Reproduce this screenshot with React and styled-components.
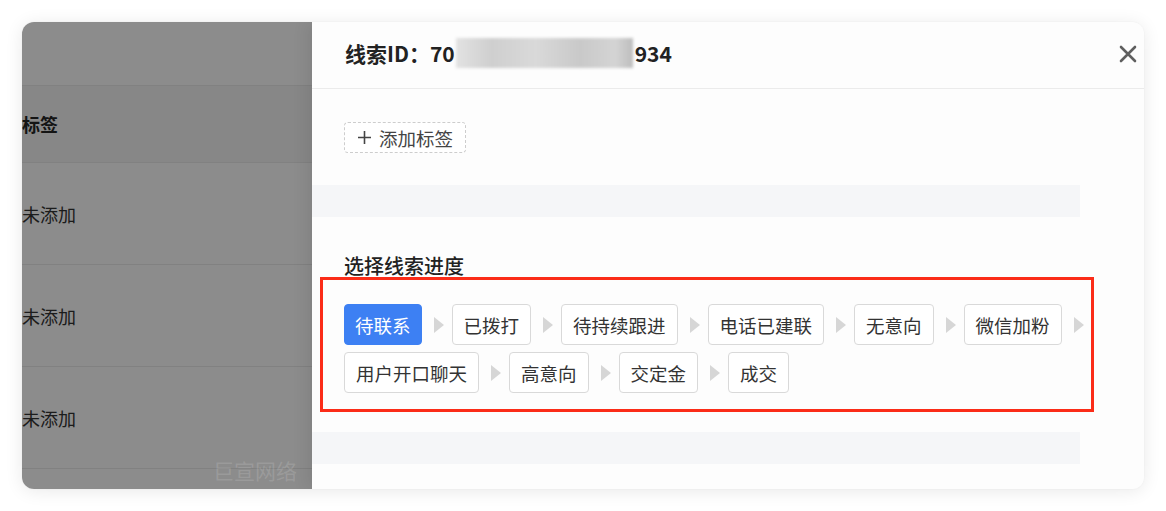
import React from "react";
import styled, { createGlobalStyle } from "styled-components";

const Global = createGlobalStyle`
  html, body { margin: 0; padding: 0; background: #ffffff; }
  body { font-family: "Noto Sans CJK SC", "Noto Sans", "Liberation Sans", sans-serif; }
  * { box-sizing: border-box; }
`;

const Page = styled.div`
  width: 1166px;
  height: 511px;
  padding: 22px 0 0 22px;
`;

const Card = styled.div`
  position: relative;
  width: 1122px;
  height: 467px;
  border-radius: 12px;
  overflow: hidden;
  display: flex;
  background: #fdfdfd;
  box-shadow: 0 2px 18px rgba(0, 0, 0, 0.09), 0 0 2px rgba(0, 0, 0, 0.05);
`;

const LeftPane = styled.div`
  position: relative;
  width: 290px;
  flex: none;
  background: #ffffff;
  display: flex;
  flex-direction: column;
`;

const TopBlank = styled.div`
  height: 63px;
  flex: none;
`;

const TableHead = styled.div`
  height: 78px;
  flex: none;
  display: flex;
  align-items: center;
  background: #f6f6f6;
  border-top: 1px solid #ececec;
  border-bottom: 1px solid #ececec;
  font-size: 18px;
  font-weight: 700;
  color: #262626;
`;

const TableRow = styled.div`
  height: 102px;
  flex: none;
  display: flex;
  align-items: center;
  border-bottom: 1px solid #ececec;
  font-size: 18px;
  color: #333333;
`;

const Mask = styled.div`
  position: absolute;
  inset: 0;
  background: rgba(0, 0, 0, 0.45);
`;

const Brand = styled.div`
  position: absolute;
  left: 191px;
  bottom: 4px;
  font-size: 21px;
  color: rgba(255, 255, 255, 0.14);
`;

const Drawer = styled.div`
  flex: 1;
  display: flex;
  flex-direction: column;
  background: #fdfdfd;
  box-shadow: -6px 0 14px rgba(0, 0, 0, 0.07);
  z-index: 1;
`;

const Header = styled.div`
  height: 67px;
  flex: none;
  display: flex;
  align-items: center;
  justify-content: space-between;
  padding: 0 4px 5px 33px;
  border-bottom: 1px solid #ebebeb;
`;

const Title = styled.div`
  display: flex;
  align-items: center;
  font-size: 21px;
  font-weight: 700;
  color: #222222;
  line-height: 28px;
`;

const Blurred = styled.span`
  display: inline-block;
  width: 177px;
  height: 30px;
  margin: 0 2px 0 1px;
  background: linear-gradient(90deg, #e2e2e2 0%, #cfcfcf 20%, #d9d9d9 45%, #c9c9c9 70%, #d4d4d4 90%, #bdbdbd 100%);
  filter: blur(1.5px);
`;

const CloseBtn = styled.button`
  width: 24px;
  height: 24px;
  margin-top: 3px;
  padding: 0;
  border: none;
  background: transparent;
  display: flex;
  align-items: center;
  justify-content: center;
  color: #5f5f5f;
`;

const Body = styled.div`
  width: 768px;
  display: flex;
  flex-direction: column;
`;

const AddTagRow = styled.div`
  padding: 33px 0 0 32px;
  display: flex;
`;

const AddTagBtn = styled.button`
  height: 31px;
  padding: 0 12px 0 13px;
  display: flex;
  align-items: center;
  gap: 8px;
  border: 1px dashed #cdcdcd;
  border-radius: 4px;
  background: #ffffff;
  font-family: inherit;
  font-size: 18.5px;
  color: #444444;
`;

const GrayBar = styled.div`
  height: 32px;
  margin-top: ${(p) => p.$top}px;
  background: #f5f6f8;
`;

const Section = styled.div`
  position: relative;
  padding: 0 0 0 32px;
`;

const SectionTitle = styled.div`
  margin-top: 35px;
  height: 28px;
  line-height: 28px;
  font-size: 20px;
  font-weight: 500;
  color: #222222;
`;

const StageList = styled.div`
  margin-top: 24px;
  width: 752px;
  display: flex;
  flex-wrap: wrap;
  row-gap: 7px;
`;

const StageItem = styled.div`
  display: flex;
  align-items: center;
`;

const Stage = styled.div`
  height: 41px;
  padding: 0 ${(p) => (p.$active ? 10 : 11)}px;
  display: flex;
  align-items: center;
  border-radius: 4px;
  border: 1px solid ${(p) => (p.$active ? "#3d80f3" : "#d9d9d9")};
  background: ${(p) => (p.$active ? "#3d80f3" : "#ffffff")};
  color: ${(p) => (p.$active ? "#ffffff" : "#333333")};
  font-size: 18.5px;
  white-space: nowrap;
`;

const Arrow = styled.span`
  width: 0;
  height: 0;
  margin: 0 8px 0 12px;
  border-left: 10px solid #d6d6d6;
  border-top: 8px solid transparent;
  border-bottom: 8px solid transparent;
`;

const Highlight = styled.div`
  position: absolute;
  left: 8px;
  top: 60px;
  width: 774px;
  height: 135px;
  border: 3px solid #fb2c18;
  pointer-events: none;
`;

const stages = [
  "待联系",
  "已拨打",
  "待持续跟进",
  "电话已建联",
  "无意向",
  "微信加粉",
  "用户开口聊天",
  "高意向",
  "交定金",
  "成交",
];

export default function App() {
  return (
    <Page>
      <Global />
      <Card>
        <LeftPane>
          <TopBlank />
          <TableHead>标签</TableHead>
          <TableRow>未添加</TableRow>
          <TableRow>未添加</TableRow>
          <TableRow>未添加</TableRow>
          <TableRow />
          <Mask />
          <Brand>巨宣网络</Brand>
        </LeftPane>
        <Drawer>
          <Header>
            <Title>
              线索ID：70
              <Blurred />
              934
            </Title>
            <CloseBtn aria-label="close">
              <svg width="18" height="18" viewBox="0 0 18 18">
                <path d="M2 2 L16 16 M16 2 L2 16" stroke="currentColor" strokeWidth="2.6" strokeLinecap="round" />
              </svg>
            </CloseBtn>
          </Header>
          <Body>
            <AddTagRow>
              <AddTagBtn>
                <svg width="13" height="13" viewBox="0 0 13 13">
                  <path d="M6.5 0 V13 M0 6.5 H13" stroke="currentColor" strokeWidth="1.6" />
                </svg>
                添加标签
              </AddTagBtn>
            </AddTagRow>
            <GrayBar $top={32} />
            <Section>
              <SectionTitle>选择线索进度</SectionTitle>
              <StageList>
                {stages.map((s, i) => (
                  <StageItem key={s}>
                    <Stage $active={i === 0}>{s}</Stage>
                    {i < stages.length - 1 && <Arrow />}
                  </StageItem>
                ))}
              </StageList>
              <Highlight />
            </Section>
            <GrayBar $top={39} />
          </Body>
        </Drawer>
      </Card>
    </Page>
  );
}
